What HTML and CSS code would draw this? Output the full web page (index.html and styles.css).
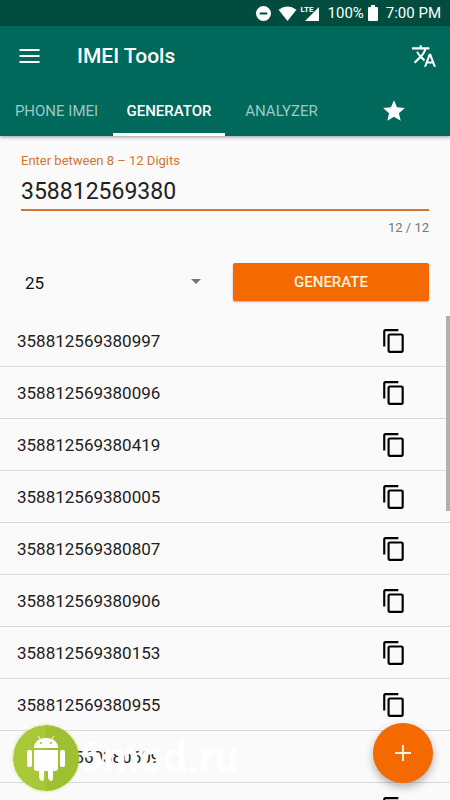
FILE: index.html
```html
<!DOCTYPE html>
<html lang="en">
<head>
<meta charset="utf-8">
<meta name="viewport" content="width=device-width, initial-scale=1">
<title>IMEI Tools</title>
<link rel="stylesheet" href="styles.css">
</head>
<body>
<svg class="defs" aria-hidden="true">
  <symbol id="copy" viewBox="0 0 24 24"><path fill="currentColor" d="M16 1H4c-1.100 0-2 .9-2 2v14h2V3h12V1zm3 4H8c-1.100 0-2 .9-2 2v14c0 1.100.9 2 2 2h11c1.100 0 2-.9 2-2V7c0-1.100-.9-2-2-2zm0 16H8V7h11v14z"/></symbol>
</svg>
<div class="app">
  <div class="status">
    <svg class="status-icon" viewBox="0 0 16 16"><path fill="currentColor" fill-rule="evenodd" d="M8 0a8 8 0 1 0 0 16A8 8 0 0 0 8 0zM4 7h8v2H4z"/></svg>
    <svg class="wifi" viewBox="0 0 19 16"><path fill="currentColor" d="M0 4Q9.500-3 19 4L9.500 16z"/></svg>
    <div class="signal"><span class="lte">LTE</span><svg class="bars" viewBox="0 0 15 15"><path fill="currentColor" d="M15 0v15H0z"/></svg></div>
    <span class="percent">100%</span>
    <svg class="battery" viewBox="0 0 10 16"><path fill="currentColor" d="M3 0h4v2h2q1 0 1 1v12q0 1-1 1H1q-1 0-1-1V3q0-1 1-1h2z"/></svg>
    <span class="time">7:00 PM</span>
  </div>
  <header class="header">
    <div class="toolbar">
      <button class="icon-button" aria-label="Menu"><svg class="menu-icon" viewBox="0 0 20 14"><path fill="currentColor" d="M0 0h20v2H0zM0 6h20v2H0zM0 12h20v2H0z"/></svg></button>
      <h1 class="title">IMEI Tools</h1>
      <button class="icon-button" aria-label="Language"><svg class="icon" viewBox="0 0 24 24"><path fill="currentColor" d="M12.870 15.070l-2.540-2.510.03-.03c1.740-1.940 2.980-4.170 3.710-6.530H17V4h-7V2H8v2H1v1.990h11.170C11.500 7.920 10.440 9.750 9 11.350 8.070 10.320 7.300 9.190 6.690 8h-2c.73 1.630 1.730 3.170 2.980 4.560l-5.090 5.020L4 19l5-5 3.110 3.110.76-2.040zM18.500 10h-2L12 22h2l1.120-3h4.750L21 22h2l-4.500-12zm-2.620 7l1.620-4.330L19.120 17h-3.240z"/></svg></button>
    </div>
    <nav class="tabs">
      <a class="tab" href="#phone">PHONE IMEI</a>
      <a class="tab active" href="#generator" aria-current="page">GENERATOR</a>
      <a class="tab" href="#analyzer">ANALYZER</a>
      <a class="tab" href="#favorites" aria-label="Favorites"><svg class="icon star" viewBox="0 0 24 24"><path fill="currentColor" d="M12 17.270L18.180 21l-1.640-7.030L22 9.240l-7.190-.61L12 2 9.190 8.630 2 9.240l5.460 4.730L5.820 21z"/></svg></a>
    </nav>
  </header>
  <main class="content">
    <form class="form">
      <label class="label" for="digits">Enter between 8 – 12 Digits</label>
      <input class="digits" id="digits" type="text" inputmode="numeric" maxlength="12" value="358812569380">
      <div class="counter">12 / 12</div>
      <div class="actions">
        <div class="select-wrap">
          <select class="count" aria-label="Number of results"><option>25</option></select>
          <svg class="caret" viewBox="0 0 10 5"><path fill="currentColor" d="M0 0h10L5 5z"/></svg>
        </div>
        <button class="generate" type="button">GENERATE</button>
      </div>
    </form>
    <ul class="list">
      <li class="row"><span>358812569380997</span><button class="copy" aria-label="Copy"><svg class="icon"><use href="#copy"/></svg></button></li>
      <li class="row"><span>358812569380096</span><button class="copy" aria-label="Copy"><svg class="icon"><use href="#copy"/></svg></button></li>
      <li class="row"><span>358812569380419</span><button class="copy" aria-label="Copy"><svg class="icon"><use href="#copy"/></svg></button></li>
      <li class="row"><span>358812569380005</span><button class="copy" aria-label="Copy"><svg class="icon"><use href="#copy"/></svg></button></li>
      <li class="row"><span>358812569380807</span><button class="copy" aria-label="Copy"><svg class="icon"><use href="#copy"/></svg></button></li>
      <li class="row"><span>358812569380906</span><button class="copy" aria-label="Copy"><svg class="icon"><use href="#copy"/></svg></button></li>
      <li class="row"><span>358812569380153</span><button class="copy" aria-label="Copy"><svg class="icon"><use href="#copy"/></svg></button></li>
      <li class="row"><span>358812569380955</span><button class="copy" aria-label="Copy"><svg class="icon"><use href="#copy"/></svg></button></li>
      <li class="row"><span>358812569380609</span><button class="copy" aria-label="Copy"><svg class="icon"><use href="#copy"/></svg></button></li>
      <li class="row"><span></span><button class="copy" aria-label="Copy"><svg class="icon"><use href="#copy"/></svg></button></li>
    </ul>
    <div class="scrollbar"></div>
  </main>
  <div class="brand">
    <svg class="brand-logo" viewBox="0 0 66 66">
      <circle cx="33" cy="33" r="33" fill="#a8c83a"/>
      <path d="M33 0a33 33 0 0 1 0 66z" fill="#a0c034"/>
      <g fill="#fff"><path d="M21 23c0-6 5-10 12-10s12 4 12 10z"/><path d="M21 25h24v18q0 3-3 3h-2v7q0 3-2 3t-3-3v-7h-4v7q0 3-2 3t-3-3v-7h-2q-3 0-3-3z"/><rect x="14" y="25" width="5" height="17" rx="2"/><rect x="47" y="25" width="5" height="17" rx="2"/></g>
      <path d="M28 15l-3-4M38 15l3-4" stroke="#fff"/><circle cx="28" cy="18" r="1" fill="#98b92f"/><circle cx="38" cy="18" r="1" fill="#98b92f"/>
    </svg>
    <span class="brand-name">5mod.ru</span>
  </div>
  <button class="fab" aria-label="Add"><svg class="plus" viewBox="0 0 16 16"><path fill="currentColor" d="M7 0h2v7h7v2H9v7H7V9H0V7h7z"/></svg></button>
</div>
</body>
</html>
```
FILE: styles.css
```css
* { box-sizing: border-box; }
body { margin: 0; font-family: Roboto, sans-serif; background: #fafafa; color: #212121; }
button { border: 0; padding: 0; background: none; font: inherit; color: inherit; }
.defs { position: absolute; width: 0; height: 0; }
.app { position: relative; height: 100vh; display: flex; flex-direction: column; overflow: hidden; }
.icon { display: block; width: 26px; height: 26px; }
.status { display: flex; align-items: center; justify-content: flex-end; height: 26px; padding: 0 9px; background: #004d40; color: #fff; font-size: 15px; flex-shrink: 0; }
.status-icon { width: 15px; height: 15px; margin-right: 7px; }
.wifi { width: 19px; height: 15px; margin-right: 4px; }
.signal { position: relative; width: 18px; height: 15px; margin-right: 9px; }
.lte { position: absolute; left: 0; top: 0; font: 700 8px/8px "Liberation Sans Narrow", Roboto, sans-serif; }
.bars { position: absolute; right: 0; bottom: 0; width: 14px; height: 14px; }
.battery { width: 10px; height: 16px; margin: 0 8px 0 4px; }
.header { position: relative; z-index: 1; flex-shrink: 0; background: #00695c; color: #fff; box-shadow: 0 1px 4px rgba(0,0,0,.4); }
.toolbar { display: flex; align-items: center; height: 60px; padding: 0 13px 0 19px; }
.menu-icon { display: block; width: 21px; height: 14px; }
.title { flex: 1; margin: 0 0 0 37px; font-size: 21px; font-weight: 500; }
.tabs { display: grid; grid-template-columns: 113fr 112fr 113fr 112fr; height: 50px; }
.tab { display: flex; align-items: center; justify-content: center; padding-top: 2px; color: #9bcac2; text-decoration: none; font-size: 15px; border-bottom: 3px solid transparent; }
.active { color: #fff; font-weight: 500; border-color: #fff; }
.star { color: #fff; }
.content { position: relative; flex: 1; min-height: 0; overflow: hidden; }
.form { padding: 16px 21px 0; }
.label { display: block; font-size: 13px; line-height: 18px; color: #d47432; }
.digits { display: block; width: 100%; height: 41px; padding: 4px 0 0; border: 0; border-bottom: 2px solid #d47432; background: none; outline: 0; font: 23px Roboto, sans-serif; color: #212121; }
.counter { margin-top: 8px; text-align: right; font-size: 13px; line-height: 18px; color: #757575; }
.actions { display: grid; grid-template-columns: 1fr 1fr; gap: 16px; margin-top: 26px; height: 40px; }
.select-wrap { position: relative; }
.count { width: 100%; height: 100%; appearance: none; border: 0; padding: 0 4px; background: none; font: 17px Roboto, sans-serif; color: #111; }
.caret { position: absolute; right: 16px; top: 16px; width: 10px; height: 5px; color: #757575; pointer-events: none; }
.generate { height: 38px; border-radius: 2px; background: #f56a00; color: #fff3d8; font-size: 15px; font-weight: 500; box-shadow: 0 1px 2px rgba(0,0,0,.3); }
.list { list-style: none; margin: 12px 0 0; padding: 0; }
.row { display: flex; align-items: center; justify-content: space-between; height: 52px; padding: 1px 43px 0 17px; border-bottom: 1px solid #d9d9d9; font-size: 17px; }
.copy { color: #000; }
.scrollbar { position: absolute; right: 0; top: 180px; width: 4px; height: 195px; background: #b0b0b0; }
.brand { position: absolute; left: 13px; bottom: 9px; display: flex; align-items: center; }
.brand-logo { display: block; width: 66px; height: 66px; border-radius: 50%; box-shadow: 0 0 3px #c5dc7a; }
.brand-name { color: #fff; font-size: 42px; line-height: 48px; font-weight: 700; }
.fab { position: absolute; right: 17px; bottom: 17px; display: grid; place-items: center; width: 60px; height: 60px; border-radius: 50%; background: #f56a00; color: #fff3e0; box-shadow: 0 4px 8px rgba(0,0,0,.3); }
.plus { display: block; width: 16px; height: 16px; }
```
